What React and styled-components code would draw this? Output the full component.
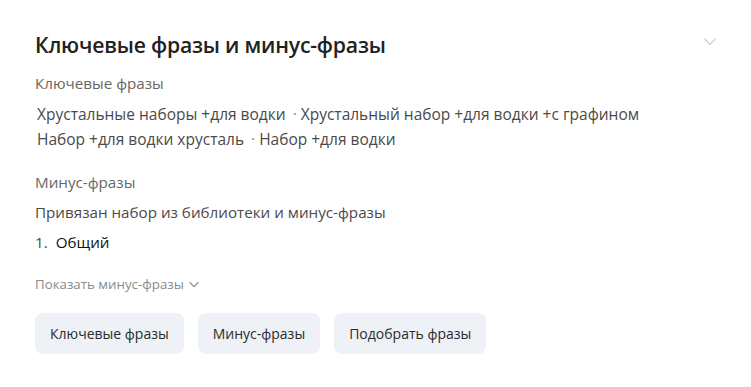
import styled, { createGlobalStyle } from 'styled-components';

const GlobalStyle = createGlobalStyle`
  body {
    margin: 0;
    background: #fff;
    font-family: "Open Sans", "Noto Sans", sans-serif;
  }
`;

const Card = styled.section`
  width: 751px;
  height: 387px;
  box-sizing: border-box;
  padding: 28px 32px 0 35px;
`;

const Header = styled.div`
  display: flex;
  justify-content: space-between;
  align-items: center;
`;

const Title = styled.h2`
  margin: 0;
  font-size: 21.2px;
  font-weight: 600;
  color: #222;
  line-height: 34px;
  letter-spacing: -0.2px;
`;

const Collapse = styled.button`
  border: 0;
  background: none;
  padding: 0;
  margin-top: -8px;
  display: flex;
  color: #cfcfcf;
`;

const Label = styled.div`
  margin-top: ${(p) => p.$top || 0}px;
  font-size: 15.2px;
  color: #666;
  line-height: 25px;
`;

const Phrases = styled.div`
  margin-top: 6px;
  padding-left: 2px;
  font-size: 15.5px;
  color: #4a4a4a;
  line-height: 25px;
`;

const Dot = styled.span`
  color: #888;
  margin: 0 4px 0 7px;
`;

const Text = styled.div`
  margin-top: ${(p) => p.$top || 0}px;
  font-size: 15.2px;
  color: #4a4a4a;
  line-height: 25px;
`;

const ListItem = styled.div`
  margin-top: 5px;
  display: flex;
  gap: 8px;
  font-size: 15.2px;
  line-height: 25px;
  color: #4a4a4a;
  & b {
    font-weight: 400;
    color: #111;
  }
`;

const ShowMore = styled.button`
  margin-top: 19px;
  border: 0;
  background: none;
  padding: 0;
  display: flex;
  align-items: center;
  gap: 3px;
  font-family: inherit;
  font-size: 13.3px;
  color: #8a8a8a;
  line-height: 20px;
`;

const Actions = styled.div`
  margin-top: 19px;
  display: flex;
  gap: 14px;
`;

const Action = styled.button`
  height: 41px;
  padding: 0 15px;
  border: 0;
  border-radius: 8px;
  background: #eef1f6;
  font-family: inherit;
  font-size: 14px;
  color: #2b2b2b;
`;

const Chevron = ({ size = 16, stroke = 1.4 }) => (
  <svg width={size} height={size} viewBox="0 0 16 16" fill="none">
    <path d="M3 6l5 5 5-5" stroke="currentColor" strokeWidth={stroke} />
  </svg>
);

const phrases1 = ['Хрустальные наборы +для водки', 'Хрустальный набор +для водки +с графином'];
const phrases2 = ['Набор +для водки хрусталь', 'Набор +для водки'];

const Line = ({ items }) => (
  <div>
    {items.map((t, i) => (
      <span key={t}>
        {i > 0 && <Dot>·</Dot>}
        {t}
      </span>
    ))}
  </div>
);

export default function App() {
  return (
    <>
      <GlobalStyle />
      <Card>
        <Header>
          <Title>Ключевые фразы и минус-фразы</Title>
          <Collapse aria-label="Свернуть">
            <Chevron size={18} stroke={1.2} />
          </Collapse>
        </Header>
        <Label $top={9}>Ключевые фразы</Label>
        <Phrases>
          <Line items={phrases1} />
          <Line items={phrases2} />
        </Phrases>
        <Label $top={18}>Минус-фразы</Label>
        <Text $top={5}>Привязан набор из библиотеки и минус-фразы</Text>
        <ListItem>
          <span>1.</span>
          <b>Общий</b>
        </ListItem>
        <ShowMore>
          Показать минус-фразы
          <Chevron size={14} stroke={1.3} />
        </ShowMore>
        <Actions>
          <Action>Ключевые фразы</Action>
          <Action>Минус-фразы</Action>
          <Action>Подобрать фразы</Action>
        </Actions>
      </Card>
    </>
  );
}
